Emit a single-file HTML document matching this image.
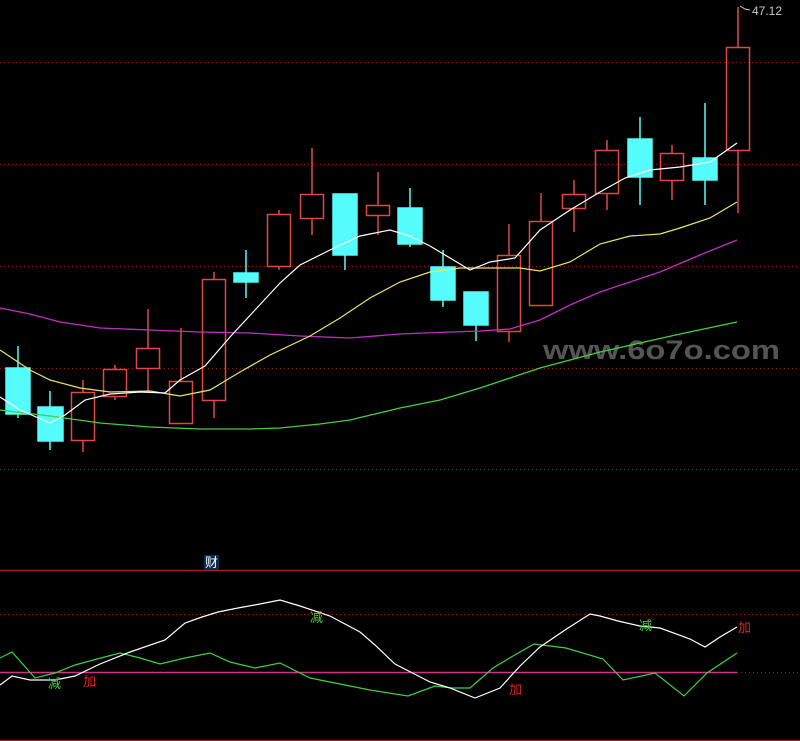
<!DOCTYPE html>
<html><head><meta charset="utf-8"><style>
html,body{margin:0;padding:0;background:#000;width:800px;height:741px;overflow:hidden}
svg{display:block}
</style></head><body>
<svg width="800" height="741" viewBox="0 0 800 741" xmlns="http://www.w3.org/2000/svg">
<rect width="800" height="741" fill="#000"/>
<g stroke="#8a1e1e" stroke-width="1" stroke-dasharray="1,3">
<line x1="0" y1="62.5" x2="800" y2="62.5"/>
<line x1="0" y1="164.5" x2="800" y2="164.5"/>
<line x1="0" y1="266.5" x2="800" y2="266.5"/>
<line x1="0" y1="368.5" x2="800" y2="368.5"/>
<line x1="0" y1="469.5" x2="800" y2="469.5"/>
<line x1="0" y1="614.5" x2="800" y2="614.5"/>
<line x1="737" y1="672.5" x2="800" y2="672.5"/>
</g>
<line x1="0" y1="570.5" x2="800" y2="570.5" stroke="#a01e1e" stroke-width="1.5"/>
<line x1="0" y1="740.5" x2="800" y2="740.5" stroke="#a01e1e" stroke-width="1.5"/>
<line x1="0" y1="672.5" x2="737" y2="672.5" stroke="#d0308a" stroke-width="1.5"/>
<text x="543" y="359" textLength="237" lengthAdjust="spacingAndGlyphs" font-family="Liberation Sans, sans-serif" font-weight="bold" font-size="27" fill="#555">www.6o7o.com</text>
<!-- candles -->
<g stroke-width="1.5">
<g stroke="#54fcfc" fill="#54fcfc">
<line x1="18" y1="346" x2="18" y2="418"/><rect x="6" y="368" width="24" height="46"/>
<line x1="50" y1="391" x2="50" y2="450"/><rect x="38" y="407" width="25" height="34"/>
<line x1="246" y1="250" x2="246" y2="298"/><rect x="234" y="273" width="24" height="9"/>
<line x1="345" y1="194" x2="345" y2="270"/><rect x="333" y="194" width="24" height="61"/>
<line x1="410" y1="188" x2="410" y2="247"/><rect x="398" y="208" width="24" height="36"/>
<line x1="443" y1="250" x2="443" y2="307"/><rect x="431" y="267" width="24" height="33"/>
<line x1="476" y1="292" x2="476" y2="341"/><rect x="464" y="292" width="24" height="33"/>
<line x1="640" y1="117" x2="640" y2="205"/><rect x="628" y="139" width="24" height="38"/>
<line x1="705" y1="103" x2="705" y2="205"/><rect x="693" y="158" width="24" height="22"/>
</g>
<g stroke="#e04848" fill="none">
<line x1="83" y1="380" x2="83" y2="392"/><line x1="83" y1="441" x2="83" y2="452"/><rect x="71.5" y="392.5" width="23" height="48"/>
<line x1="115" y1="365" x2="115" y2="369"/><line x1="115" y1="397" x2="115" y2="400"/><rect x="103.5" y="369.5" width="23" height="27"/>
<line x1="148" y1="309" x2="148" y2="348"/><line x1="148" y1="369" x2="148" y2="392"/><rect x="136.5" y="348.5" width="23" height="20"/>
<line x1="181" y1="328" x2="181" y2="381"/><rect x="169.5" y="381.5" width="23" height="42"/>
<line x1="214" y1="272" x2="214" y2="279"/><line x1="214" y1="401" x2="214" y2="418"/><rect x="202.5" y="279.5" width="23" height="121"/>
<line x1="279" y1="210" x2="279" y2="214"/><line x1="279" y1="267" x2="279" y2="270"/><rect x="267.5" y="214.5" width="23" height="52"/>
<line x1="312" y1="148" x2="312" y2="194"/><line x1="312" y1="219" x2="312" y2="235"/><rect x="300.5" y="194.5" width="23" height="24"/>
<line x1="378" y1="172" x2="378" y2="205"/><line x1="378" y1="216" x2="378" y2="235"/><rect x="366.5" y="205.5" width="23" height="10"/>
<line x1="509" y1="224" x2="509" y2="255"/><line x1="509" y1="332" x2="509" y2="342"/><rect x="497.5" y="255.5" width="23" height="76"/>
<line x1="541" y1="193" x2="541" y2="221"/><rect x="529.5" y="221.5" width="23" height="84"/>
<line x1="574" y1="180" x2="574" y2="194"/><line x1="574" y1="209" x2="574" y2="232"/><rect x="562.5" y="194.5" width="23" height="14"/>
<line x1="607" y1="140" x2="607" y2="150"/><line x1="607" y1="194" x2="607" y2="210"/><rect x="595.5" y="150.5" width="23" height="43"/>
<line x1="672" y1="145" x2="672" y2="153"/><line x1="672" y1="181" x2="672" y2="200"/><rect x="660.5" y="153.5" width="23" height="27"/>
<line x1="738" y1="7" x2="738" y2="47"/><line x1="738" y1="151" x2="738" y2="213"/><rect x="726.5" y="47.5" width="23" height="103"/>
</g>
</g>
<!-- MAs -->
<polyline fill="none" stroke="#c030c0" stroke-width="1.3" points="0,308 30,314 60,322 100,328 150,330 200,332 250,333 300,336 350,338 400,334 450,332 480,331 510,329 540,320 570,305 600,292 630,282 660,272 700,255 737,240"/>
<polyline fill="none" stroke="#40d040" stroke-width="1.3" points="0,410 50,416 100,423 150,427 200,429 250,429 280,428 320,424 350,420 400,408 440,400 480,388 510,378 540,368 570,360 600,352 640,343 680,334 737,322"/>
<polyline fill="none" stroke="#e8e860" stroke-width="1.2" points="0,350 30,370 50,380 80,388 110,392 150,391 180,396 210,390 240,372 270,355 310,336 340,318 370,298 400,282 430,272 460,268 490,268 520,268 540,271 570,262 600,244 630,236 660,234 680,228 710,218 737,202"/>
<polyline fill="none" stroke="#ffffff" stroke-width="1.2" points="0,397 20,410 50,423 65,415 85,400 110,394 140,392 165,393 180,380 205,366 230,337 255,310 280,283 300,265 330,250 360,236 390,230 410,236 430,246 450,258 470,270 490,262 515,258 540,230 570,210 600,192 625,178 650,170 680,167 710,162 737,143"/>
<polyline fill="none" stroke="#ccc" stroke-width="1" points="740,6 745,9 750,10"/>
<text x="752" y="15" font-family="Liberation Sans, sans-serif" font-size="12" fill="#c8c8c8">47.12</text>
<!-- bottom indicator -->
<polyline fill="none" stroke="#40d040" stroke-width="1.2" points="0,658 12,652 35,678 55,673 75,665 97,659 120,653 140,658 160,664 185,658 210,653 230,662 255,668 280,663 310,678 345,685 370,690 408,696 435,686 452,688 470,688 493,668 513,656 534,644 566,648 603,659 623,680 655,673 684,696 707,673 737,653"/>
<polyline fill="none" stroke="#ffffff" stroke-width="1.2" points="0,685 12,676 30,680 55,680 75,676 100,664 130,652 165,640 185,623 202,617 218,612 238,608 260,604 280,600 300,606 330,616 360,632 375,645 395,664 430,682 450,688 475,698 500,688 520,666 540,647 565,630 590,614 600,616 618,621 640,626 660,628 690,639 705,647 720,637 737,627"/>
<g font-family="Liberation Sans, 'Noto Sans CJK SC', sans-serif" font-size="13">
<text x="48" y="688" fill="#40d040">减</text>
<text x="83" y="686" fill="#e02020">加</text>
<text x="310" y="622" fill="#40d040">减</text>
<text x="509" y="694" fill="#e02020">加</text>
<text x="639" y="630" fill="#40d040">减</text>
<text x="738" y="632" fill="#e02020">加</text>
</g>
<rect x="204" y="555" width="15" height="15" fill="#0a2a50"/>
<text x="205" y="567" font-family="Liberation Sans, 'Noto Sans CJK SC', sans-serif" font-size="13" fill="#ffffff">财</text>
</svg>
</body></html>
